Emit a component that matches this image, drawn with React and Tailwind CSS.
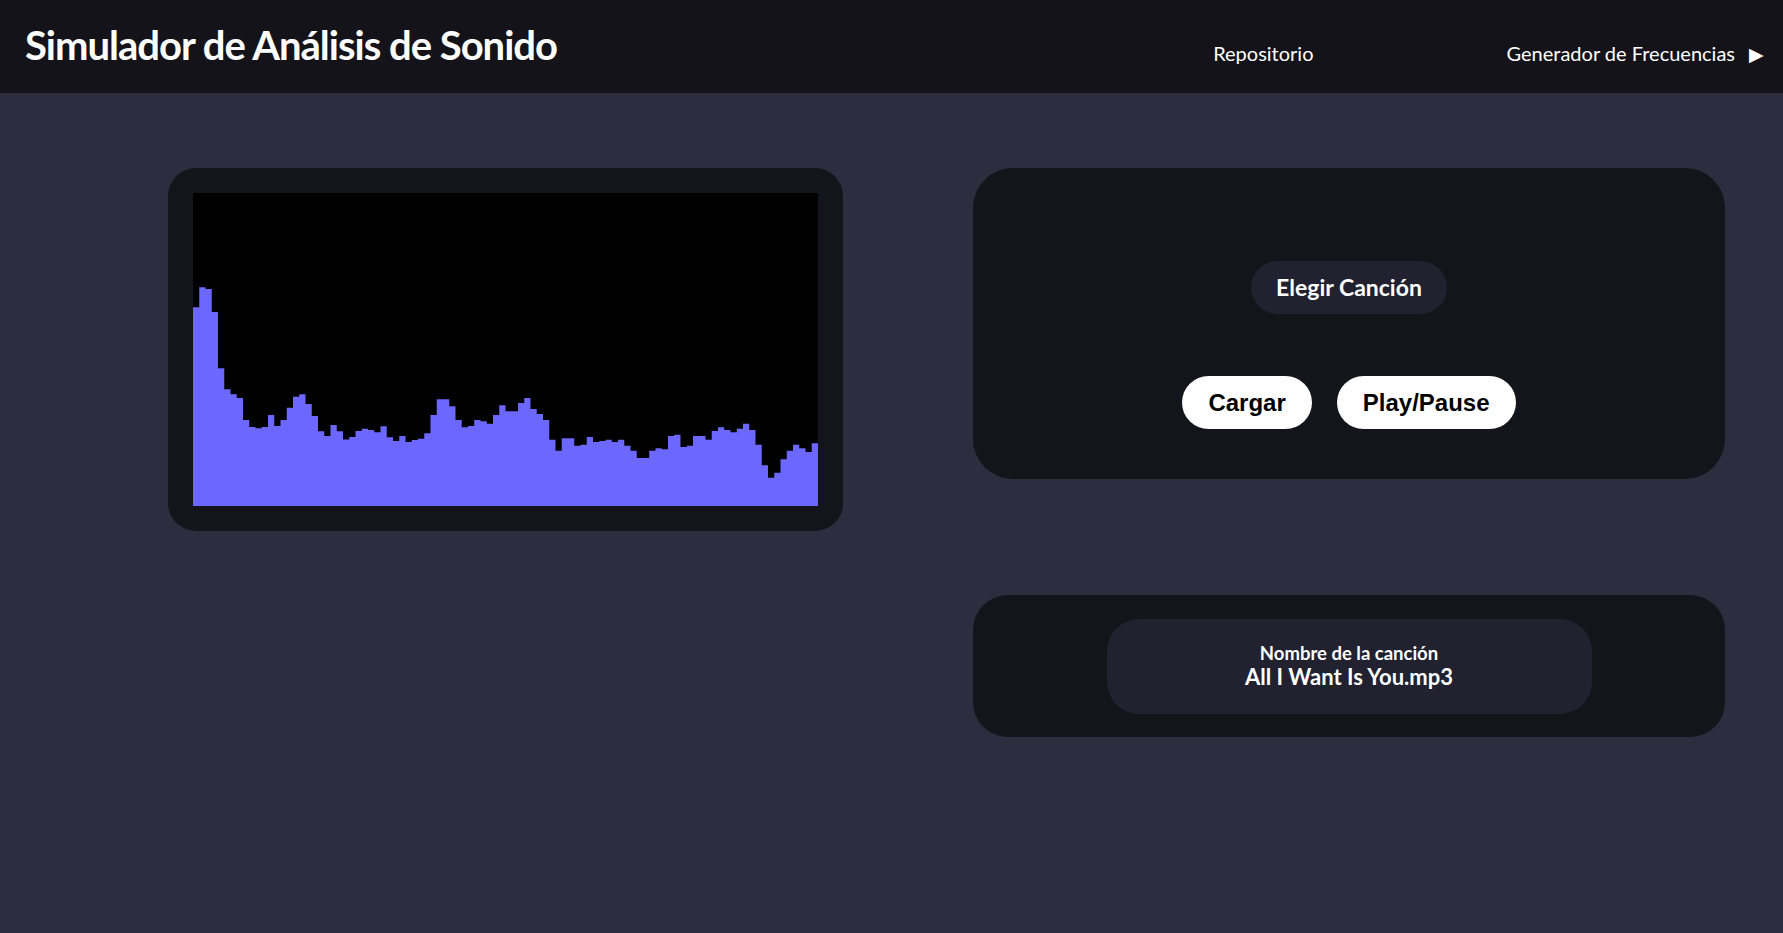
const bars = [
  198.7, 218.7, 217, 194, 137.7, 116.7, 111.7, 108, 86, 79,
  77.7, 79, 91, 80, 86, 98.3, 109.3, 111.7, 102, 90,
  74.7, 70, 81, 74.7, 66.5, 69, 75, 77.3, 76, 73.7,
  79.7, 68.7, 65, 70, 64, 66, 67.3, 72.7, 91, 106.7,
  106.7, 99.7, 86, 78.7, 80, 86, 84.7, 82.3, 91, 100.7,
  94.7, 94.7, 103, 108, 97, 92, 86, 66.3, 55.3, 67.7,
  67.7, 60.3, 61.3, 69, 64, 65, 66.3, 64, 66.3, 60.3,
  55.3, 48, 48, 55.3, 57.7, 56.7, 70, 71.3, 59, 60.3,
  70, 70, 66.3, 75, 78.7, 76, 73.7, 77.3, 82.3, 76,
  61.3, 40.7, 28.3, 33.3, 46.7, 55.3, 61.3, 57.7, 54, 62.7,
];

const Spectrum = () => {
  const w = 625;
  const h = 313;
  const bw = w / bars.length;
  // one outline for all bars so there are no seams between them
  let d = `M0 ${h}`;
  bars.forEach((v, i) => {
    d += ` L${i * bw} ${h - v} L${(i + 1) * bw} ${h - v}`;
  });
  d += ` L${w} ${h} Z`;
  return (
    <svg width={w} height={h} viewBox={`0 0 ${w} ${h}`} className="block bg-black">
      <path d={d} fill="#6c67ff" />
    </svg>
  );
};

const App = () => {
  return (
    <div className="min-h-[933px] bg-[#2c2d3e] font-['Lato',sans-serif] text-white">
      <header className="h-[93px] bg-[#131319] flex items-center pl-[25px] pr-[19px]">
        <h1 className="text-[40px] font-bold leading-[1.2] tracking-[-1px] mb-[3px]">
          Simulador de Análisis de Sonido
        </h1>
        <nav className="ml-auto flex items-center mt-[13px] text-[20px] leading-[1.2]">
          <a className="mr-[193px]">Repositorio</a>
          <a className="flex items-center">
            Generador de Frecuencias
            <span className="ml-[14px] text-[19px] leading-none">▶</span>
          </a>
        </nav>
      </header>

      <main className="flex items-start pl-[168px] pt-[75px] gap-[130px]">
        <div className="bg-[#14141b] rounded-[28px] p-[25px]">
          <Spectrum />
        </div>

        <div className="flex flex-col gap-[116px]">
          <div className="w-[752px] h-[311px] bg-[#14141b] rounded-[40px] flex flex-col items-center pt-[93px]">
            <button className="h-[53px] px-[25px] rounded-full bg-[#212130] text-[23px] font-bold text-white">
              Elegir Canción
            </button>
            <div className="flex gap-[25px] mt-[62px] font-['Liberation_Sans',Arial,sans-serif]">
              <button className="h-[53px] px-[26px] rounded-full bg-white text-black text-[24px] font-bold">
                Cargar
              </button>
              <button className="h-[53px] px-[26px] rounded-full bg-white text-black text-[24px] font-bold">
                Play/Pause
              </button>
            </div>
          </div>

          <div className="w-[752px] h-[142px] bg-[#14141b] rounded-[35px] flex items-center justify-center">
            <div className="w-[485px] h-[95px] bg-[#212130] rounded-[32px] flex flex-col items-center justify-center">
              <p className="text-[18.5px] font-bold leading-[1.2]">Nombre de la canción</p>
              <p className="text-[22px] font-bold leading-[1.2]">All I Want Is You.mp3</p>
            </div>
          </div>
        </div>
      </main>
    </div>
  );
};

export default App;
